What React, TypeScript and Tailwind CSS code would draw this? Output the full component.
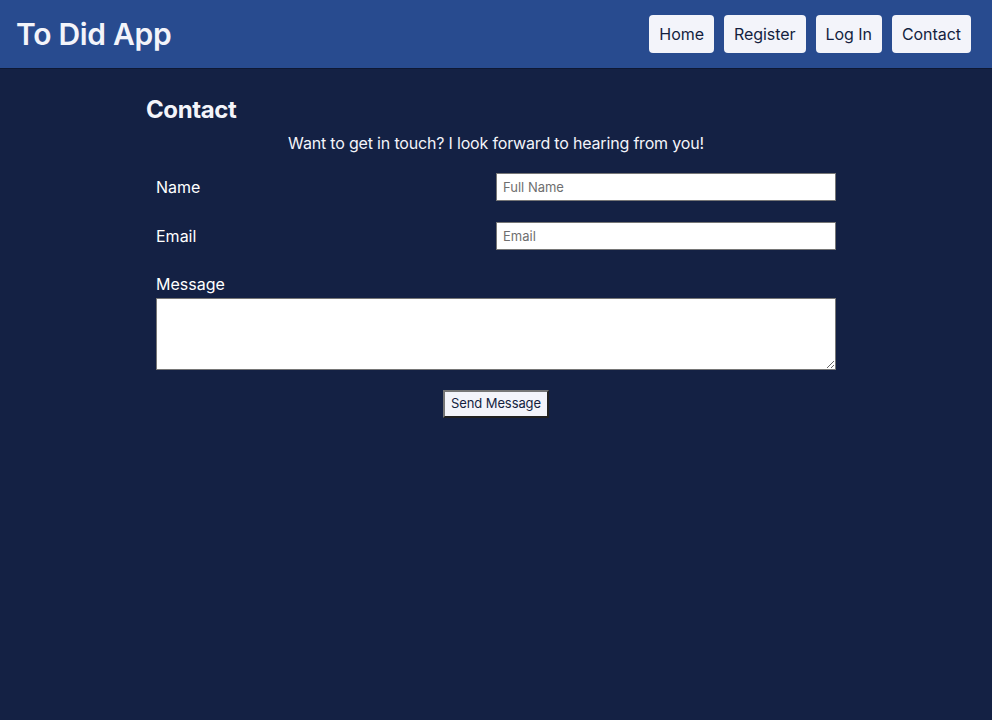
import React from "react";

const navItems = ["Home", "Register", "Log In", "Contact"];

export default function App() {
  return (
    <div className="min-h-screen bg-[#142144] font-['Inter',sans-serif] text-white">
      <header className="flex h-[69px] items-center justify-between border-b border-[#0e1833] bg-[#284b8f] pl-4 pr-[21px]">
        <h1 className="text-[30px] font-semibold tracking-[-0.3px] text-[#f3f4fa]">To Did App</h1>
        <nav className="flex items-center gap-[10px]">
          {navItems.map((item) => (
            <a
              key={item}
              href="#"
              className="flex h-[38px] items-center rounded-[4px] bg-[#f3f4fa] px-[10px] text-[16px] tracking-[-0.05px] text-[#141f3f]"
            >
              {item}
            </a>
          ))}
        </nav>
      </header>

      <main className="mx-auto w-[700px] pt-[26px]">
        <h2 className="text-[24px] font-bold leading-[30px] tracking-[-0.4px] text-[#f3f4fa]">Contact</h2>
        <p className="mt-[6px] text-center text-[16px] leading-[24px] tracking-[-0.18px] text-[#f3f4fa]">
          Want to get in touch? I look forward to hearing from you!
        </p>

        <form className="mt-[18px] px-[10px]">
          <div className="grid grid-cols-2 items-start">
            <label className="pt-[2px] text-[16px] leading-[24px]">Name</label>
            <input
              type="text"
              placeholder="Full Name"
              className="h-[28px] border border-[#767676] bg-white px-[6px] text-[13px] text-black placeholder:text-[#6f6f6f]"
            />
          </div>
          <div className="mt-[21px] grid grid-cols-2 items-start">
            <label className="pt-[2px] text-[16px] leading-[24px]">Email</label>
            <input
              type="email"
              placeholder="Email"
              className="h-[28px] border border-[#767676] bg-white px-[6px] text-[13px] text-black placeholder:text-[#6f6f6f]"
            />
          </div>
          <div className="mt-[22px] flex flex-col">
            <label className="text-[16px] leading-[24px]">Message</label>
            <textarea className="mt-[2px] h-[72px] w-full border border-[#767676] bg-white text-black" />
          </div>
          <div className="mt-[20px] flex justify-center">
            <button
              type="button"
              className="h-[28px] border-2 border-[#767676] bg-[#f3f4fa] px-[6px] text-[13px] tracking-[-0.1px] text-[#141f3f]"
              style={{ borderStyle: "outset" }}
            >
              Send Message
            </button>
          </div>
        </form>
      </main>
    </div>
  );
}
